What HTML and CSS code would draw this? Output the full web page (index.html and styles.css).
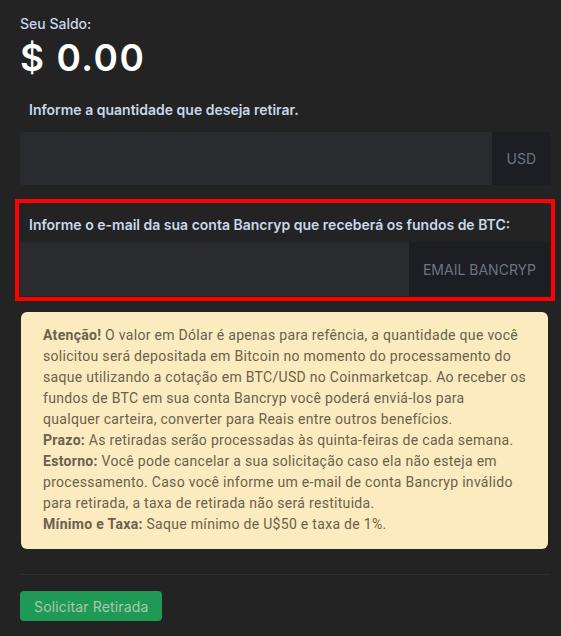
FILE: index.html
```
<!DOCTYPE html>
<html lang="pt-BR">
<head>
    <meta charset="UTF-8">
    <meta name="viewport" content="width=device-width, initial-scale=1.0">
    <title>Retirada</title>
    <link rel="stylesheet" href="styles.css">
</head>
<body>
    <div class="card-body">
        <div class="saldo-label">Seu Saldo:</div>
        <div class="saldo">$ 0.00</div>

        <label class="field-label">Informe a quantidade que deseja retirar.</label>
        <div class="input-group">
            <input type="text" class="form-control">
            <span class="addon">USD</span>
        </div>

        <div class="highlight">
            <label class="field-label">Informe o e-mail da sua conta Bancryp que receberá os fundos de BTC:</label>
            <div class="input-group">
                <input type="text" class="form-control">
                <span class="addon">EMAIL BANCRYP</span>
            </div>
        </div>

        <div class="alert">
            <strong>Atenção!</strong> O valor em Dólar é apenas para refência, a quantidade que você solicitou será depositada em Bitcoin no momento do processamento do saque utilizando a cotação em BTC/USD no Coinmarketcap. Ao receber os fundos de BTC em sua conta Bancryp você poderá enviá-los para qualquer&nbsp;carteira, converter para Reais entre outros benefícios.<br>
            <strong>Prazo:</strong> As retiradas serão processadas às quinta-feiras de cada semana.<br>
            <strong>Estorno:</strong> Você pode cancelar a sua solicitação caso ela não esteja em processamento. Caso você informe um e-mail de conta Bancryp inválido para retirada, a taxa de retirada não será restituida.<br>
            <strong>Mínimo e Taxa:</strong> Saque mínimo de U$50 e taxa de 1%.
        </div>

        <hr>

        <button class="btn-success">Solicitar Retirada</button>
    </div>
</body>
</html>
```

FILE: styles.css
```
body {
    margin: 0;
    background: #232323;
    font-family: Inter, Roboto, sans-serif;
    font-size: 14px;
}

.card-body {
    padding: 14px 11px 0 20px;
}

.saldo-label {
    color: #c9d7ea;
    font-size: 14px;
    font-weight: 500;
    line-height: 20px;
}

.saldo {
    color: #fff;
    font-size: 37px;
    font-weight: 600;
    letter-spacing: 1.5px;
    line-height: 48px;
    margin-bottom: 18px;
}

.field-label {
    display: block;
    color: #c9d7ea;
    font-size: 14px;
    font-weight: 600;
    line-height: 20px;
    padding-left: 9px;
    margin-bottom: 12px;
}

.input-group {
    display: flex;
    height: 53px;
}

.form-control {
    flex: 1;
    min-width: 0;
    background: #2a2b2e;
    border: none;
    border-radius: 3px 0 0 3px;
    outline: none;
}

.addon {
    display: flex;
    align-items: center;
    padding: 0 14px;
    background: #1c1e24;
    color: #6c7480;
    font-size: 14px;
    border-radius: 0 3px 3px 0;
}

.highlight {
    margin: 14px -5px 11px -5px;
    padding: 12px 1px 1px 1px;
    border: 4px solid #f00;
}

.highlight .input-group {
    height: 54px;
}

.highlight .field-label {
    margin-bottom: 7px;
}

.alert {
    background: #fbebbe;
    color: #6b614e;
    font-family: Roboto, sans-serif;
    font-size: 14px;
    letter-spacing: 0.3px;
    line-height: 21px;
    padding: 13px 20px 14px 22px;
    border-radius: 6px;
    margin: 0 2px 0 1px;
}

.alert strong {
    font-weight: 700;
}

hr {
    border: none;
    border-top: 1px solid #2f2f2f;
    margin: 25px 0 16px 0;
}

.btn-success {
    background: #1f9a55;
    color: #a9c6b3;
    border: none;
    border-radius: 4px;
    font-family: Inter, Roboto, sans-serif;
    font-size: 14px;
    letter-spacing: 0.15px;
    padding: 0 14px;
    height: 30px;
}
```
